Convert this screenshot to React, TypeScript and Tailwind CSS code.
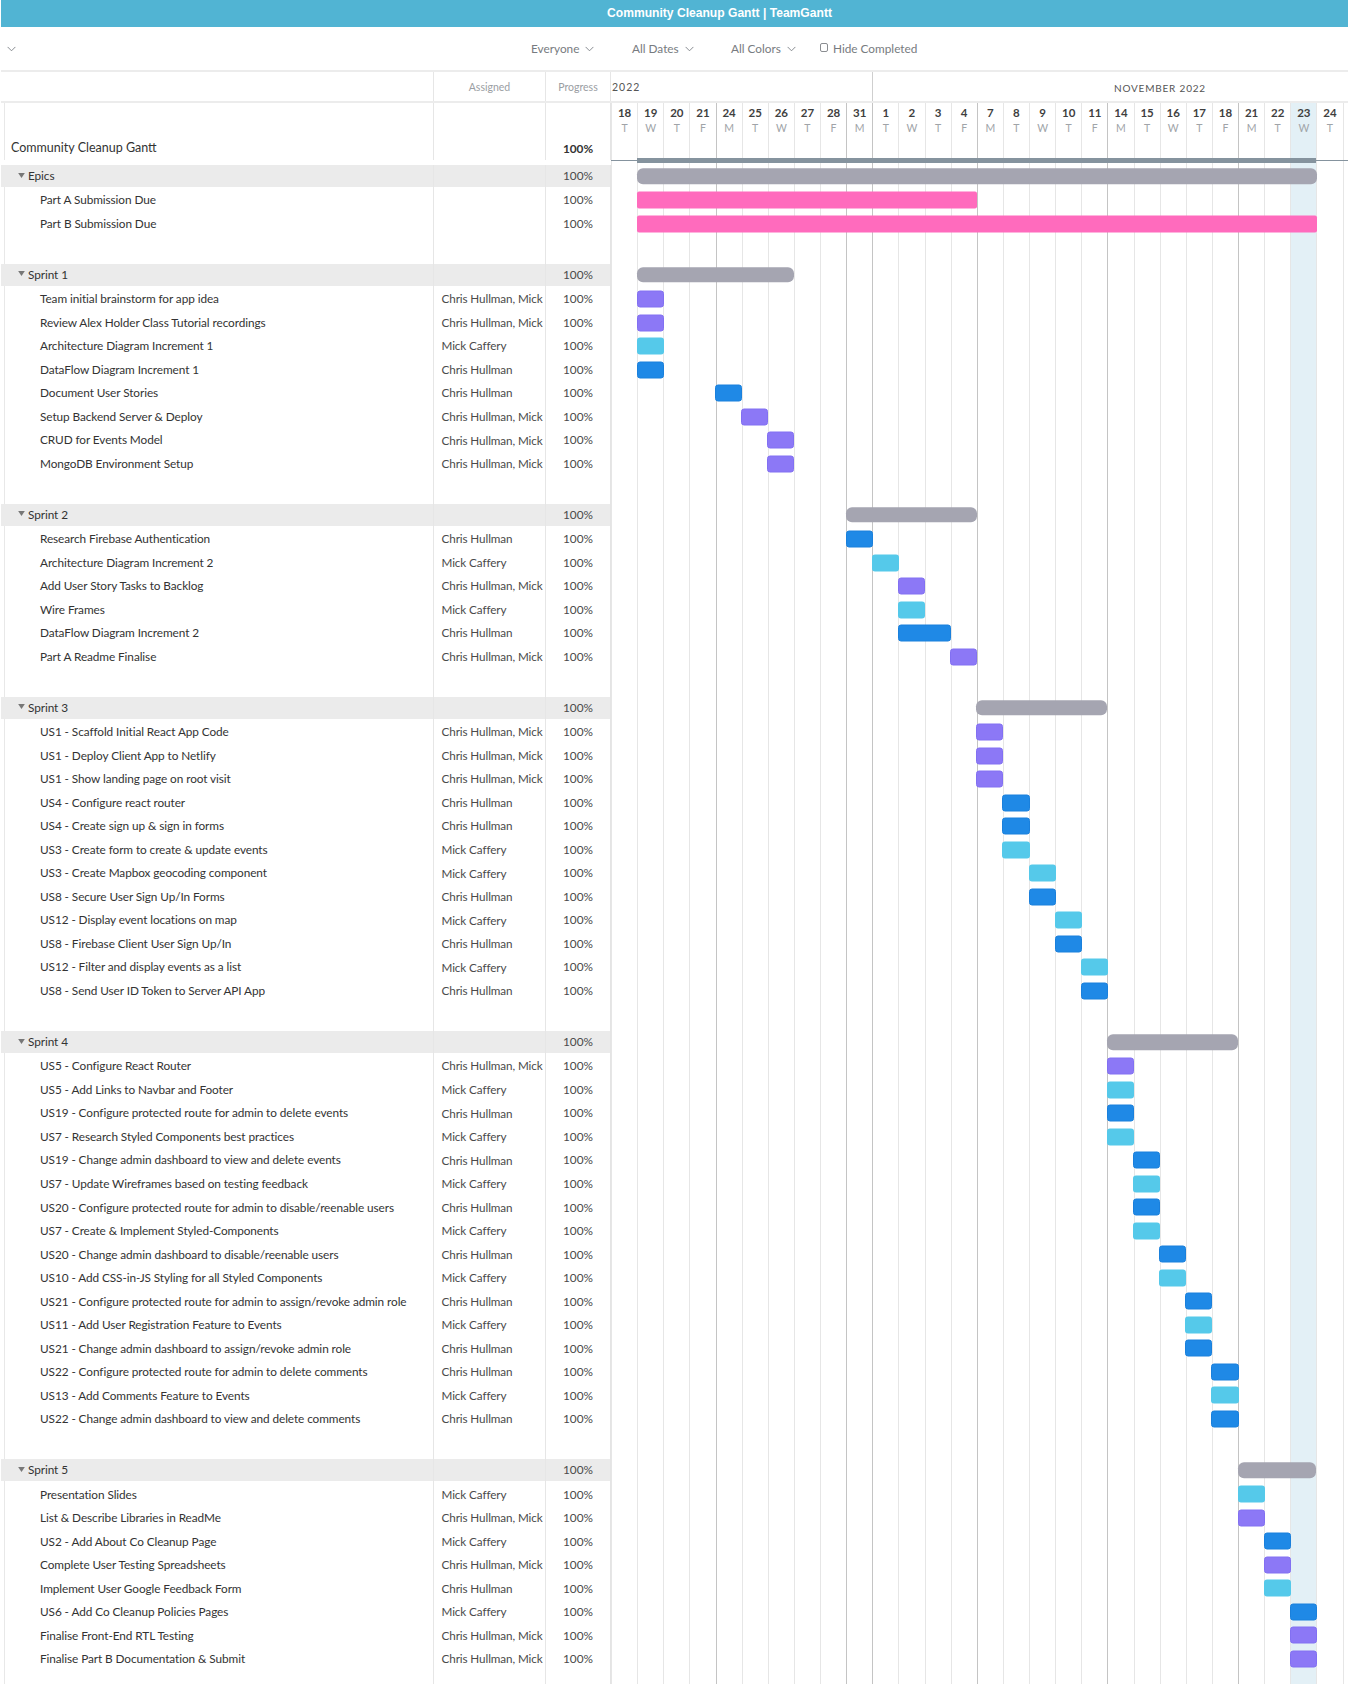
import React from "react";

type C = "p" | "l" | "b";
type Task = [string, string, C, number, number?];
const CH = "Chris Hullman";
const MC = "Mick Caffery";
const BOTH = "Chris Hullman, Mick";

const days: [string, string][] = [
  ["18", "T"], ["19", "W"], ["20", "T"], ["21", "F"], ["24", "M"], ["25", "T"], ["26", "W"], ["27", "T"], ["28", "F"], ["31", "M"],
  ["1", "T"], ["2", "W"], ["3", "T"], ["4", "F"], ["7", "M"], ["8", "T"], ["9", "W"], ["10", "T"], ["11", "F"],
  ["14", "M"], ["15", "T"], ["16", "W"], ["17", "T"], ["18", "F"], ["21", "M"], ["22", "T"], ["23", "W"], ["24", "T"],
];
const COL = 26.13;

const sections: { name: string; start: number; span: number; tasks: Task[] }[] = [
  { name: "Sprint 1", start: 1, span: 6, tasks: [
    ["Team initial brainstorm for app idea", BOTH, "p", 1],
    ["Review Alex Holder Class Tutorial recordings", BOTH, "p", 1],
    ["Architecture Diagram Increment 1", MC, "l", 1],
    ["DataFlow Diagram Increment 1", CH, "b", 1],
    ["Document User Stories", CH, "b", 4],
    ["Setup Backend Server & Deploy", BOTH, "p", 5],
    ["CRUD for Events Model", BOTH, "p", 6],
    ["MongoDB Environment Setup", BOTH, "p", 6],
  ]},
  { name: "Sprint 2", start: 9, span: 5, tasks: [
    ["Research Firebase Authentication", CH, "b", 9],
    ["Architecture Diagram Increment 2", MC, "l", 10],
    ["Add User Story Tasks to Backlog", BOTH, "p", 11],
    ["Wire Frames", MC, "l", 11],
    ["DataFlow Diagram Increment 2", CH, "b", 11, 2],
    ["Part A Readme Finalise", BOTH, "p", 13],
  ]},
  { name: "Sprint 3", start: 14, span: 5, tasks: [
    ["US1 - Scaffold Initial React App Code", BOTH, "p", 14],
    ["US1 - Deploy Client App to Netlify", BOTH, "p", 14],
    ["US1 - Show landing page on root visit", BOTH, "p", 14],
    ["US4 - Configure react router", CH, "b", 15],
    ["US4 - Create sign up & sign in forms", CH, "b", 15],
    ["US3 - Create form to create & update events", MC, "l", 15],
    ["US3 - Create Mapbox geocoding component", MC, "l", 16],
    ["US8 - Secure User Sign Up/In Forms", CH, "b", 16],
    ["US12 - Display event locations on map", MC, "l", 17],
    ["US8 - Firebase Client User Sign Up/In", CH, "b", 17],
    ["US12 - Filter and display events as a list", MC, "l", 18],
    ["US8 - Send User ID Token to Server API App", CH, "b", 18],
  ]},
  { name: "Sprint 4", start: 19, span: 5, tasks: [
    ["US5 - Configure React Router", BOTH, "p", 19],
    ["US5 - Add Links to Navbar and Footer", MC, "l", 19],
    ["US19 - Configure protected route for admin to delete events", CH, "b", 19],
    ["US7 - Research Styled Components best practices", MC, "l", 19],
    ["US19 - Change admin dashboard to view and delete events", CH, "b", 20],
    ["US7 - Update Wireframes based on testing feedback", MC, "l", 20],
    ["US20 - Configure protected route for admin to disable/reenable users", CH, "b", 20],
    ["US7 - Create & Implement Styled-Components", MC, "l", 20],
    ["US20 - Change admin dashboard to disable/reenable users", CH, "b", 21],
    ["US10 - Add CSS-in-JS Styling for all Styled Components", MC, "l", 21],
    ["US21 - Configure protected route for admin to assign/revoke admin role", CH, "b", 22],
    ["US11 - Add User Registration Feature to Events", MC, "l", 22],
    ["US21 - Change admin dashboard to assign/revoke admin role", CH, "b", 22],
    ["US22 - Configure protected route for admin to delete comments", CH, "b", 23],
    ["US13 - Add Comments Feature to Events", MC, "l", 23],
    ["US22 - Change admin dashboard to view and delete comments", CH, "b", 23],
  ]},
  { name: "Sprint 5", start: 24, span: 3, tasks: [
    ["Presentation Slides", MC, "l", 24],
    ["List & Describe Libraries in ReadMe", BOTH, "p", 24],
    ["US2 - Add About Co Cleanup Page", MC, "b", 25],
    ["Complete User Testing Spreadsheets", BOTH, "p", 25],
    ["Implement User Google Feedback Form", CH, "l", 25],
    ["US6 - Add Co Cleanup Policies Pages", MC, "b", 26],
    ["Finalise Front-End RTL Testing", BOTH, "p", 26],
    ["Finalise Part B Documentation & Submit", BOTH, "p", 26],
  ]},
];

const barClass: Record<C, string> = {
  p: "bg-[#8c78f6] border border-[#8270f2] rounded-[3px] h-[17px]",
  l: "bg-[#55c9ea] rounded-[3px] h-[17px]",
  b: "bg-[#1f89e6] border border-[#1a80dc] rounded-[3px] h-[17px]",
};

function Bar({ start, span, cls, extra = 1 }: { start: number; span: number; cls: string; extra?: number }) {
  return (
    <div
      className={`absolute top-1/2 -translate-y-1/2 ${cls}`}
      style={{ left: start * COL - 0.5, width: span * COL + extra }}
    />
  );
}

function Row({
  h,
  group,
  name,
  assigned,
  progress,
  bold,
  children,
}: {
  h: string;
  group?: boolean;
  name?: React.ReactNode;
  assigned?: string;
  progress?: string;
  bold?: boolean;
  children?: React.ReactNode;
}) {
  return (
    <div className={`flex ${h}`}>
      <div className={`flex w-[609px] shrink-0 ${group ? "bg-[#ebebeb]" : ""}`}>
        <div className="w-[432px] shrink-0 flex">
          <div className={`w-[4px] shrink-0 ${group ? "" : "border-r border-[#e8e8e8]"}`} />
          <div className="flex-1 flex items-center">{name}</div>
        </div>
        <div className="w-[112px] shrink-0 border-l border-[#e6e6e6] flex items-center pl-[7.5px] overflow-hidden whitespace-nowrap text-[11.7px] tracking-[-0.1px] text-[#4a4a4a]">
          {assigned}
        </div>
        <div className={`w-[65px] shrink-0 border-l border-[#e6e6e6] flex items-center justify-center text-[11.8px] ${bold ? "text-[#333] font-bold" : "text-[#4a4a4a]"}`}>
          {progress}
        </div>
      </div>
      <div className="flex-1 relative border-l border-[#e4e4e4]">{children}</div>
    </div>
  );
}

function Chevron({ className }: { className?: string }) {
  return (
    <svg viewBox="0 0 10 6" className={`w-[9px] h-[6px] ${className ?? ""}`} fill="none" stroke="#7b7f85" strokeWidth="1">
      <path d="M0.7 0.7 L5 5 L9.3 0.7" />
    </svg>
  );
}

function Filter({ label, w }: { label: string; w: string }) {
  return (
    <div className={`flex items-center gap-[6px] ${w}`}>
      <span>{label}</span>
      <Chevron />
    </div>
  );
}

export default function App() {
  return (
    <div
      className="h-[1684px] w-[1348px] overflow-hidden bg-white pl-px"
      style={{ fontFamily: "Lato, 'Liberation Sans', sans-serif" }}
    >
      <div className="h-[27px] pb-[1px] bg-[#51b4d3] flex items-center justify-center text-white text-[12.1px] font-bold" style={{ fontFamily: "'Liberation Sans', Roboto, sans-serif" }}>
        <span className="ml-[90px]">Community Cleanup Gantt | TeamGantt</span>
      </div>
      <div className="h-[45px] border-b-2 border-[#ececec] flex items-center text-[11.8px] text-[#777b80]">
        <Chevron className="ml-[6px] mr-[515px]" />
        <Filter label="Everyone" w="w-[101px]" />
        <Filter label="All Dates" w="w-[99px]" />
        <Filter label="All Colors" w="w-[89px]" />
        <div className="flex items-center gap-[5px]">
          <span className="w-[8px] h-[9px] border border-[#8a8d91] rounded-[2px] bg-white mb-[2px]" />
          <span>Hide Completed</span>
        </div>
      </div>
      <div className="flex h-[31px] border-b-2 border-[#ececec]">
        <div className="w-[432px] shrink-0" />
        <div className="w-[112px] shrink-0 border-l border-[#e6e6e6] flex items-center justify-center text-[10.5px] text-[#9a9ea3] pt-[3px]">Assigned</div>
        <div className="w-[65px] shrink-0 border-l border-[#e6e6e6] flex items-center justify-center text-[10.5px] text-[#9a9ea3] pt-[3px]">Progress</div>
        <div className="w-[262px] shrink-0 border-l border-[#e6e6e6] flex items-center pl-[1px] text-[10.5px] tracking-[1px] text-[#555] pt-[3px]">2022</div>
        <div className="flex-1 border-l border-[#cfcfcf] flex items-center pl-[241px] text-[10px] tracking-[0.8px] text-[#555] whitespace-nowrap pt-[3px]">NOVEMBER 2022</div>
      </div>
      <div className="relative">
        <div className="absolute top-0 left-[610px] h-[1600px] flex">
          {days.map(([n, l], i) => {
            const dark = l === "M" || i === 10;
            return (
              <div
                key={i}
                className={`w-[26.13px] shrink-0 h-full border-l text-center ${dark ? "border-[#c4c4c4]" : "border-[#e6e6e6]"} ${i === 26 ? "bg-[#e3f0f6]" : ""}`}
              >
                <div className="text-[11.5px] font-bold text-[#3f3f3f] mt-[2px] leading-[16px]">{n}</div>
                <div className="text-[10.5px] text-[#a0a4a8] leading-[14px]">{l}</div>
              </div>
            );
          })}
          <div className="w-0 h-full border-l border-[#e6e6e6]" />
        </div>
        <div className="relative">
          <Row h="h-[34px]" />
          <Row
            h="h-[28px] pb-[5px]"
            bold
            name={<span className="pl-[6px] text-[12.5px] text-[#333]">Community Cleanup Gantt</span>}
            progress="100%"
          >
            <div className="absolute left-0 right-0 top-[23px] h-[1px] bg-[#85939e]" />
            <div className="absolute top-[21px] h-[5px] bg-[#85939e]" style={{ left: COL - 0.5, width: 26 * COL }} />
          </Row>
          <GroupRow name="Epics" start={1} span={26} />
          <TaskRow name="Part A Submission Due">
            <Bar start={1} span={13} cls="h-[17px] rounded-[2px] bg-[#ff6bbd]" />
          </TaskRow>
          <TaskRow name="Part B Submission Due">
            <Bar start={1} span={26} cls="h-[17px] rounded-[2px] bg-[#ff6bbd]" />
          </TaskRow>
          <Row h="h-[28.4px]" />
          {sections.map((s) => (
            <React.Fragment key={s.name}>
              <GroupRow name={s.name} start={s.start} span={s.span} />
              {s.tasks.map(([name, who, c, start, span], i) => (
                <TaskRow key={i} name={name} assigned={who}>
                  <Bar start={start} span={span ?? 1} cls={barClass[c]} />
                </TaskRow>
              ))}
              <Row h="h-[28.4px]" />
            </React.Fragment>
          ))}
        </div>
      </div>
    </div>
  );
}

function GroupRow({ name, start, span }: { name: string; start: number; span: number }) {
  return (
    <>
      <Row
        h="h-[22px]"
        group
        name={
          <span className="flex items-center text-[11.8px] tracking-[-0.08px] text-[#333] pl-[13px] pb-[1px]">
            <svg viewBox="0 0 8 6" className="w-[7px] h-[5px] mr-[3px] mb-[1px]" fill="#777">
              <path d="M0 0 H8 L4 6 Z" />
            </svg>
            {name}
          </span>
        }
        progress="100%"
      >
        <Bar start={start} span={span} cls="h-[15.5px] rounded-[6px] bg-[#a5a5b1]" extra={0.5} />
      </Row>
      <Row h="h-[1.5px]" />
    </>
  );
}

function TaskRow({ name, assigned, children }: { name: string; assigned?: string; children?: React.ReactNode }) {
  return (
    <Row
      h="h-[23.53px]"
      name={<span className="pl-[35px] text-[11.8px] tracking-[-0.08px] text-[#333] whitespace-nowrap">{name}</span>}
      assigned={assigned}
      progress="100%"
    >
      {children}
    </Row>
  );
}
